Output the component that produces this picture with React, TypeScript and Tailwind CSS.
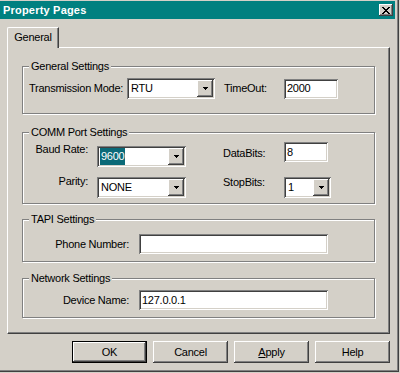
import type { ReactNode } from "react";

const RAISED =
  "shadow-[inset_-1px_-1px_0_#404040,inset_1px_1px_0_#ffffff,inset_-2px_-2px_0_#808080]";
const SUNKEN =
  "shadow-[inset_1px_1px_0_#808080,inset_-1px_-1px_0_#ffffff,inset_2px_2px_0_#404040,inset_-2px_-2px_0_#d4d0c8]";

function Arrow() {
  return (
    <svg width="5" height="3" viewBox="0 0 5 3" shapeRendering="crispEdges">
      <path d="M0 0h5v1H0zM1 1h3v1H1zM2 2h1v1H2z" fill="#000" />
    </svg>
  );
}

function Combo({
  value,
  className,
  selected = false,
}: {
  value: string;
  className: string;
  selected?: boolean;
}) {
  return (
    <div className={`flex h-[21px] shrink-0 bg-white p-[2px] ${SUNKEN} ${className}`}>
      <div className="flex flex-1 items-center pl-[1px]">
        <span className={selected ? "bg-[#0b6a78] px-[1px] text-white" : "px-[1px]"}>{value}</span>
      </div>
      <div className={`flex w-[16px] items-center justify-center bg-[#d4d0c8] ${RAISED}`}>
        <Arrow />
      </div>
    </div>
  );
}

function Field({ value, className }: { value: string; className: string }) {
  return (
    <div className={`flex h-[20px] shrink-0 items-center bg-white pl-[3px] ${SUNKEN} ${className}`}>
      {value}
    </div>
  );
}

function Group({
  title,
  className,
  children,
}: {
  title: string;
  className: string;
  children: ReactNode;
}) {
  return (
    <fieldset
      className={`border border-[#808080] shadow-[inset_1px_1px_0_#ffffff,1px_1px_0_#ffffff] ${className}`}
    >
      <legend className="ml-[6px] bg-[#d4d0c8] px-[2px] leading-[13px]">{title}</legend>
      {children}
    </fieldset>
  );
}

function Button({ children, isDefault = false }: { children: ReactNode; isDefault?: boolean }) {
  return (
    <button
      type="button"
      className={`flex h-[22px] w-[75px] items-center justify-center bg-[#d4d0c8] ${RAISED} ${
        isDefault ? "border border-black" : ""
      }`}
    >
      {children}
    </button>
  );
}

export default function App() {
  return (
    <div className="h-[373px] w-[400px] bg-[#d4d0c8] font-['Liberation_Sans',Arial,sans-serif] text-[11px] tracking-[-0.25px] text-black">
      <div className="flex h-[372px] w-[399px] flex-col pt-[1px] shadow-[inset_-1px_-1px_0_#404040,inset_-2px_-2px_0_#808080]">
        {/* caption */}
        <div className="mr-[4px] flex h-[18px] items-center justify-between bg-[#008080] pl-[3px] pr-[2px]">
          <span className="font-bold tracking-[0.2px] text-white">Property Pages</span>
          <div className={`flex h-[12px] w-[14px] items-center justify-center bg-[#d4d0c8] ${RAISED}`}>
            <svg width="8" height="7" viewBox="0 0 8 7" shapeRendering="crispEdges">
              <path
                d="M0 0h2v1H0zM6 0h2v1H6zM1 1h2v1H1zM5 1h2v1H5zM2 2h4v1H2zM3 3h2v1H3zM2 4h4v1H2zM1 5h2v1H1zM5 5h2v1H5zM0 6h2v1H0zM6 6h2v1H6z"
                fill="#000"
              />
            </svg>
          </div>
        </div>

        <div className="flex flex-1 flex-col pl-[7px] pr-[9px] pt-[8px]">
          {/* tab strip */}
          <div className="flex">
            <div className="relative z-10 -mb-[1px] flex h-[21px] w-[52px] items-center justify-center rounded-tl-[2px] border-l border-t border-r border-l-white border-t-white border-r-[#404040] bg-[#d4d0c8] pb-[2px] shadow-[inset_-1px_0_0_#808080]">
              General
            </div>
          </div>

          {/* page */}
          <div className="flex h-[287px] flex-col border border-b-[#404040] border-l-white border-r-[#404040] border-t-white px-[14px] pt-[12px] shadow-[inset_-1px_-1px_0_#808080]">
            <Group title="General Settings" className="h-[54px]">
              <div className="mt-[5px] flex items-center pl-[6px]">
                <span className="w-[98px]">Transmission Mode:</span>
                <Combo value="RTU" className="w-[88px]" />
                <span className="ml-[9px] w-[60px]">TimeOut:</span>
                <Field value="2000" className="w-[54px]" />
              </div>
            </Group>

            <Group title="COMM Port Settings" className="mt-[12px] h-[78px]">
              <div className="flex items-start">
                <div className="flex flex-col pt-[4px]">
                  <div className="flex items-start">
                    <span className="w-[65px] text-right leading-[13px]">Baud Rate:</span>
                    <Combo value="9600" selected className="ml-[9px] mt-[3px] w-[89px]" />
                  </div>
                  <div className="mt-[8px] flex items-start">
                    <span className="w-[65px] text-right leading-[13px]">Parity:</span>
                    <Combo value="NONE" className="ml-[9px] mt-[2px] w-[89px]" />
                  </div>
                </div>
                <div className="ml-[37px] flex flex-col pt-[3px]">
                  <div className="flex items-start">
                    <span className="mt-[5px] w-[61px] leading-[13px]">DataBits:</span>
                    <Field value="8" className="w-[44px]" />
                  </div>
                  <div className="mt-[14px] flex items-start">
                    <span className="w-[61px] leading-[13px]">StopBits:</span>
                    <Combo value="1" className="mt-[1px] w-[47px]" />
                  </div>
                </div>
              </div>
            </Group>

            <Group title="TAPI Settings" className="mt-[9px] h-[49px]">
              <div className="mt-[8px] flex items-center">
                <span className="w-[106px] text-right">Phone Number:</span>
                <Field value="" className="ml-[10px] w-[189px]" />
              </div>
            </Group>

            <Group title="Network Settings" className="mt-[10px] h-[46px]">
              <div className="mt-[5px] flex items-center">
                <span className="w-[106px] text-right">Device Name:</span>
                <Field value="127.0.0.1" className="ml-[10px] w-[189px]" />
              </div>
            </Group>
          </div>

          {/* buttons */}
          <div className="mt-[7px] flex justify-end gap-[6px]">
            <Button isDefault>OK</Button>
            <Button>Cancel</Button>
            <Button>
              <span>
                <span className="underline underline-offset-[1px]">A</span>pply
              </span>
            </Button>
            <Button>Help</Button>
          </div>
        </div>
      </div>
    </div>
  );
}
